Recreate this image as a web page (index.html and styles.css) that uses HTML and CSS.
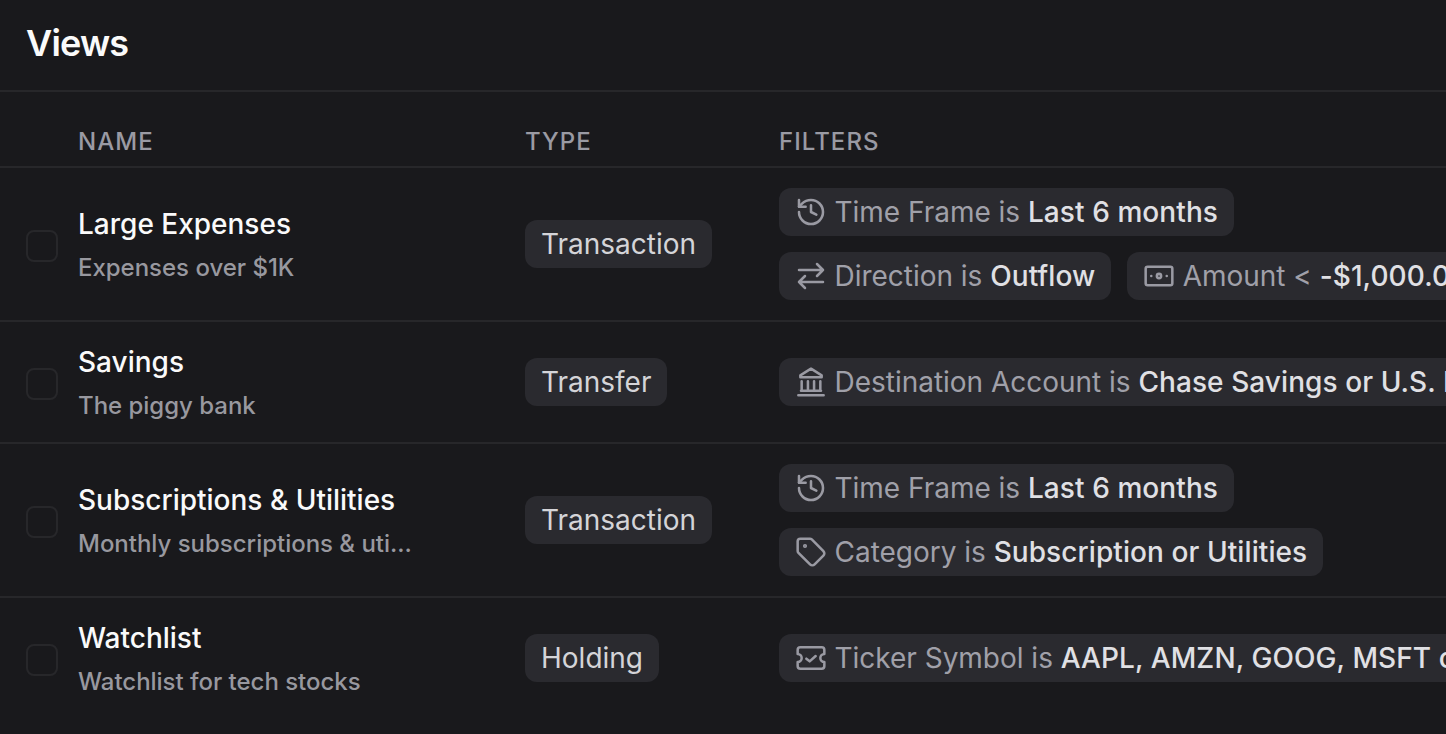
FILE: index.html
```html
<!DOCTYPE html>
<html lang="en">
<head>
<meta charset="utf-8">
<title>Views</title>
<link rel="stylesheet" href="styles.css">
</head>
<body>
<svg class="defs" width="0" height="0" aria-hidden="true">
  <symbol id="i-history" viewBox="0 0 24 24"><path d="M3 12a9 9 0 1 0 9-9 9.75 9.75 0 0 0-6.74 2.74L3 8"/><path d="M3 3v5h5"/><path d="M12 7v5l4 2"/></symbol>
  <symbol id="i-arrows" viewBox="0 0 24 24"><path d="M7.5 21 3 16.5m0 0L7.5 12M3 16.5h18M21 7.5 16.5 3M21 7.5 16.5 12M21 7.5H3"/></symbol>
  <symbol id="i-cash" viewBox="0 0 24 24"><rect x="2" y="5" width="20" height="14" rx="1.5"/><circle cx="12" cy="12" r="1.6"/><path d="M6.2 12h.01M17.8 12h.01"/></symbol>
  <symbol id="i-bank" viewBox="0 0 24 24"><path d="M4 7 12 2l8 5v1.5H4z"/><path d="M5 11.5v6M9.7 11.5v6M14.3 11.5v6M19 11.5v6M4.5 18.5h15M2.5 22h19"/></symbol>
  <symbol id="i-tag" viewBox="0 0 24 24"><path d="M12.586 2.586A2 2 0 0 0 11.172 2H4a2 2 0 0 0-2 2v7.172a2 2 0 0 0 .586 1.414l8.704 8.704a2.426 2.426 0 0 0 3.42 0l6.58-6.58a2.426 2.426 0 0 0 0-3.42z"/><circle cx="7.5" cy="7.5" r=".6"/></symbol>
  <symbol id="i-ticket" viewBox="0 0 24 24"><path d="M2 9a3 3 0 0 1 0 6v3a2 2 0 0 0 2 2h16a2 2 0 0 0 2-2v-3a3 3 0 0 1 0-6V6a2 2 0 0 0-2-2H4a2 2 0 0 0-2 2Z"/><path d="m8.5 12.5 2.5 2 4.5-4"/></symbol>
</svg>
<main class="page">
  <header class="page-header"><h1>Views</h1></header>
  <div class="row head">
    <span></span><span>Name</span><span>Type</span><span>Filters</span>
  </div>
  <div class="row">
    <span class="check"></span>
    <div class="name"><div class="title">Large Expenses</div><div class="sub">Expenses over $1K</div></div>
    <div><span class="type">Transaction</span></div>
    <div class="filters">
      <span class="pill"><svg class="icon"><use href="#i-history"/></svg>Time Frame is <b>Last 6 months</b></span>
      <span class="pill"><svg class="icon"><use href="#i-arrows"/></svg>Direction is <b>Outflow</b></span>
      <span class="pill"><svg class="icon"><use href="#i-cash"/></svg>Amount &lt; <b>-$1,000.00</b></span>
    </div>
  </div>
  <div class="row">
    <span class="check"></span>
    <div class="name"><div class="title">Savings</div><div class="sub">The piggy bank</div></div>
    <div><span class="type">Transfer</span></div>
    <div class="filters">
      <span class="pill"><svg class="icon"><use href="#i-bank"/></svg>Destination Account is <b>Chase Savings or U.S. Bank</b></span>
    </div>
  </div>
  <div class="row">
    <span class="check"></span>
    <div class="name"><div class="title">Subscriptions &amp; Utilities</div><div class="sub">Monthly subscriptions &amp; uti...</div></div>
    <div><span class="type">Transaction</span></div>
    <div class="filters">
      <span class="pill"><svg class="icon"><use href="#i-history"/></svg>Time Frame is <b>Last 6 months</b></span>
      <span class="pill"><svg class="icon"><use href="#i-tag"/></svg>Category is <b>Subscription or Utilities</b></span>
    </div>
  </div>
  <div class="row last">
    <span class="check"></span>
    <div class="name"><div class="title">Watchlist</div><div class="sub">Watchlist for tech stocks</div></div>
    <div><span class="type">Holding</span></div>
    <div class="filters">
      <span class="pill"><svg class="icon"><use href="#i-ticket"/></svg>Ticker Symbol is <b>AAPL, AMZN, GOOG, MSFT or NVDA</b></span>
    </div>
  </div>
</main>
</body>
</html>
```

FILE: styles.css
```css
* { box-sizing: border-box; }
html, body { margin: 0; height: 100%; overflow: hidden; background: #19191c; }
body { font-family: Inter, "Liberation Sans", sans-serif; color: #fff; width: 1446px; }
.defs { position: absolute; }
.page-header { height: 92px; border-bottom: 2px solid #27272a; padding: 0 26px; display: flex; align-items: center; }
h1 { margin: 0; font-size: 36px; font-weight: 600; line-height: 44px; padding-bottom: 4px; letter-spacing: -0.8px; color: #fafafa; }
.row {
  display: grid;
  grid-template-columns: 52px 447px 254px 1fr;
  align-items: center;
  padding: 20px 0 20px 26px;
  min-height: 122px;
  border-bottom: 2px solid #27272a;
  width: 1446px;
}
.row.last { border-bottom: 0; min-height: 120px; }
.row.head { min-height: 0; height: 76px; padding: 26px 0 0 26px; font-size: 24px; font-weight: 500; letter-spacing: 1.05px; text-transform: uppercase; color: #9a9aa3; line-height: 28px; }
.check { width: 32px; height: 32px; border: 2px solid #27272a; border-radius: 8px; margin-top: 4px; }
.title { font-size: 28px; font-weight: 500; line-height: 40px; color: #fafafa; letter-spacing: 0; }
.sub { font-size: 24px; font-weight: 500; line-height: 32px; color: #98989f; margin-top: 8px; letter-spacing: -0.02px; white-space: nowrap; }
.name { margin-top: -1px; }
.type { display: inline-flex; align-items: center; height: 48px; padding: 0 16px; border-radius: 12px; background: #2a2a2f; color: #d4d4d8; font-size: 28px; line-height: 40px; }
.filters { display: flex; flex-wrap: wrap; gap: 16px; width: 760px; }
.pill { display: inline-flex; align-items: center; height: 48px; padding: 0 16px; border-radius: 12px; background: #2a2a2f; color: #a0a0a9; font-size: 28px; line-height: 40px; letter-spacing: -0.02px; white-space: pre; flex: none; }
.pill:first-child:nth-last-child(3), .pill:first-child:nth-last-child(2) { margin-right: 200px; }
.pill b { font-weight: 500; color: #e0e0e4; letter-spacing: 0.08px; }
.icon { width: 32px; height: 32px; margin-right: 7.5px; fill: none; stroke: #9a9aa3; stroke-width: 1.9; stroke-linecap: round; stroke-linejoin: round; flex: none; }
```
